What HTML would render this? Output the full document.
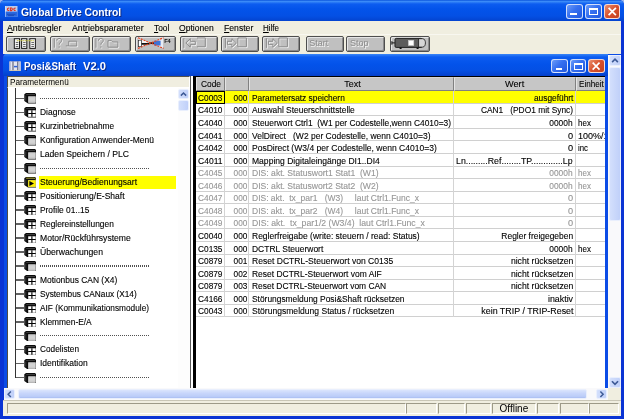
<!DOCTYPE html>
<html><head><meta charset="utf-8"><title>Global Drive Control</title>
<style>
*{box-sizing:border-box;margin:0;padding:0}
html,body{width:624px;height:419px;overflow:hidden;background:#9ab6ee}
body{font-family:"Liberation Sans",sans-serif;font-size:9.5px;color:#000;position:relative}
.a{position:absolute}
#win{left:0;top:0;width:624px;height:419px;background:#0a34d4;border-radius:5px 5px 0 0}
#tbar{left:0;top:0;width:624px;height:21px;border-radius:5px 5px 0 0;background:linear-gradient(#0a54dc 0,#3a8af8 1.5px,#0c5cf0 4px,#0353ea 9px,#0450e4 16px,#0443cf 21px)}
#ttl{left:20.6px;top:6.1px;color:#fff;font-weight:bold;font-size:11px;transform-origin:0 0;transform:scaleX(.936);text-shadow:1px 1px 0 #0a2a8a;white-space:nowrap}
#menu{left:3px;top:21px;width:618px;height:13px;background:#f0eee0}
#menu span{-webkit-text-stroke:.12px;position:absolute;top:.5px;font-size:8.5px;line-height:13px;white-space:nowrap}
#menu u{text-decoration:underline;text-decoration-thickness:.7px;text-underline-offset:1px}
#tool{left:3px;top:34px;width:618px;height:20px;background:#f0eee0;border-top:1px solid #f8f7f0}
.tb{position:absolute;top:36.3px;height:15.3px;overflow:hidden;background:#c0c0c0;border:1px solid #4e4e4e;box-shadow:inset 1px 1px 0 #e6e6e6,inset -1px -1px 0 #8a8a8a;border-radius:2px}
.tb span{position:absolute;left:2.6px;top:1.2px;font-size:9px;color:#8c8c8c;text-shadow:.8px .8px 0 #f6f6f6}
#mdi{left:3.5px;top:54px;width:617.5px;height:346px;background:#0b4ce6}
#ctb{left:3px;top:54px;width:605px;height:22px;background:linear-gradient(#3a86f7 0,#0c5cf0 3px,#0353ea 10px,#0450e4 16px,#0440cc 22px);border-top-left-radius:4px}
.cttl{left:24px;top:59.6px;color:#fff;font-weight:bold;font-size:10.5px;text-shadow:1px 1px 0 #0a2a8a;white-space:nowrap}
.cap{position:absolute;border:1px solid rgba(255,255,255,.78);border-radius:3px}
.capb{background:linear-gradient(135deg,#6c9cf8,#3670f0 45%,#2258de)}
.capr{background:linear-gradient(135deg,#e89070,#d8502c 50%,#c2421f)}
#cont{left:7px;top:76px;width:598px;height:312px;background:#fff}
#pmh{left:6.8px;top:76px;width:183px;height:11.5px;background:#f0eee0;border:1px solid;border-color:#55534a #fff #fff #4e4c44;font-size:8.5px;line-height:11px;padding-left:2px}
#tree{left:6.8px;top:87.5px;width:183.2px;height:300px;background:#fff;border-left:1px solid #4e4c44}
.tl{-webkit-text-stroke:.12px;position:absolute;left:38.5px;font-size:9px;line-height:11px;white-space:nowrap;padding:0 1.5px;letter-spacing:0}
.tl.sel{background:#ffff00;left:39.3px;padding-left:.7px;width:137px;height:13.2px;line-height:13.6px}
.dots{position:absolute;left:40px;width:110px;height:1.1px;background:repeating-linear-gradient(90deg,#505050 0 1px,transparent 1px 2px)}
.vline{position:absolute;left:15px;width:1.1px;background:#333}
.hline{position:absolute;left:15px;width:8.5px;height:1.3px;background:#626262}
.ico{position:absolute;left:23px;width:11px;height:11px}
#tsb{left:178px;top:88px;width:12px;height:300px;background:#fdfdfd}
.sbtn{position:absolute;background:linear-gradient(90deg,#d3dffc,#c0d0f9);border:1px solid #e9effd;border-radius:2px}
#blk{left:193.1px;top:75.7px;width:2.5px;height:312px;background:#000}
#gap{left:189.8px;top:76px;width:3.4px;height:312px;background:#fff;border-left:1.1px solid #5a5a5a}
#grid{left:195px;top:75.7px;width:410px;height:312.3px;background:#fff;border-top:1.2px solid #000}
.hd{-webkit-text-stroke:.1px;position:absolute;top:77px;height:13.6px;background:#c6c6c6;border-right:1px solid #808080;border-bottom:1px solid #808080;border-left:1px solid #e4e4e4;border-top:1px solid #d4d4d4;font-size:9.2px;line-height:12.6px;text-align:center;white-space:nowrap;overflow:hidden}
.r{position:absolute;left:195px;width:410px;height:12.57px;border-bottom:1px solid #d0d0d0;font-size:9.2px;line-height:13px;white-space:nowrap}
.r.y{background:#ffff00}
.r.g{color:#969696}
.r i span{position:relative;top:.6px;-webkit-text-stroke:.12px}
.r i{font-style:normal;position:absolute;top:0;height:12.57px;border-right:1px solid #d4d4d4;overflow:hidden}
.c1{left:0;width:30px;padding-left:3.3px}
.c2{left:30px;width:24px;text-align:right;padding-right:1px}
.c3{left:54px;width:205px;padding-left:3.2px}
.c4{left:259px;width:121.5px;text-align:right;padding-right:1.5px}
.c4.l{text-align:left;padding-left:2px}
.c5{left:380.5px;width:29.5px;padding-left:2.8px;border-right:0!important}
#hsb{left:3.5px;top:387.5px;width:604.5px;height:12px;background:#f9f9fb}
#vsb{left:608px;top:54.5px;width:13px;height:334px;background:#f9f9fb}
#stat{left:3px;top:400px;width:618px;height:16px;background:#f0eee0;border-top:1px solid #c9c6b6}
.sp{position:absolute;top:402.5px;height:11.5px;border:1px solid;border-color:#9d9a88 #fff #fff #9d9a88;font-size:10px;line-height:10.5px;text-align:center}
#wrap{position:absolute;left:0;top:0;width:624px;height:419px;will-change:transform}
</style></head><body><div id="wrap">
<div id="win" class="a"></div>
<div id="tbar" class="a"></div>
<svg class="a" style="left:5px;top:5.800px" width="12.500" height="10.800" viewBox="0 0 12.500 10.800"><rect width="12.500" height="10.800" fill="#bccaea"/><rect y="5.600" width="12.500" height="5.200" fill="#2a69e2"/><path d="M4.200 2.200c-2.400-.6-2.400 2.800 0 2.200M5.400 1.800v2.800c2.600.2 2.600-3 0-2.800M10.600 2.200c-2.400-.6-2.400 2.800 0 2.200" stroke="#e2341c" stroke-width="1.100" fill="none"/><path d="M2 8.300h8.500M3 9.600h6" stroke="#1a48b8" stroke-width=".9"/><path d="M.4 0v10.800" stroke="#e8eefc" stroke-width=".6"/></svg>
<div id="ttl" class="a">Global Drive Control</div>

<div class="cap capb" style="left:566.2px;top:4px;width:16.5px;height:15px"><div style="position:absolute;left:3.3px;bottom:2.7px;width:6.3px;height:2px;background:#fff"></div></div>
<div class="cap capb" style="left:585px;top:4px;width:16.5px;height:15px"><div style="position:absolute;left:3.0px;top:2.7px;width:9.2px;height:7.8px;border:1px solid #fff;border-top-width:2px"></div></div>
<div class="cap capr" style="left:603.6px;top:4px;width:16.5px;height:15px"><svg style="position:absolute;left:0;top:0" width="14.5" height="13" viewBox="0 0 10 10"><path d="M2.2 2.2L7.8 7.8M7.8 2.2L2.2 7.8" stroke="#fff" stroke-width="1.350" fill="none"/></svg></div>

<div id="menu" class="a"><span style="left:4.3px"><span id="m0" style="display:inline-block;transform-origin:0 0;transform:scaleX(1.0279)"><u>A</u>ntriebsregler</span></span><span style="left:68.7px"><span id="m1" style="display:inline-block;transform-origin:0 0;transform:scaleX(1.0235)">Ant<u>r</u>iebsparameter</span></span><span style="left:151.0px"><span id="m2" style="display:inline-block;transform-origin:0 0;transform:scaleX(0.9812)"><u>T</u>ool</span></span><span style="left:176.3px"><span id="m3" style="display:inline-block;transform-origin:0 0;transform:scaleX(1.0053)"><u>O</u>ptionen</span></span><span style="left:220.7px"><span id="m4" style="display:inline-block;transform-origin:0 0;transform:scaleX(1.0164)"><u>F</u>enster</span></span><span style="left:260.0px"><span id="m5" style="display:inline-block;transform-origin:0 0;transform:scaleX(0.9403)"><u>H</u>ilfe</span></span></div>
<div id="tool" class="a"></div>

<div class="tb" style="left:6.2px;width:40px"><svg style="position:absolute;left:0;top:0" width="38.0" height="13.300" viewBox="7.20 37.30 38.00 13.300"><g fill="#f4f4f4" stroke="#1a1a1a" stroke-width="1"><rect x="14.500" y="39" width="5.200" height="9.700"/><rect x="21.800" y="39" width="5.200" height="9.700"/><rect x="30" y="39" width="5.600" height="9.700"/></g><path d="M16 42.800h2.500M16 44.800h2.500M16 46.800h2.500M23.300 42.800h2.500M23.300 44.800h2.500M23.300 46.800h2.500M31.600 42.800h2.600M31.600 44.800h2.600M31.600 46.800h2.600" stroke="#444" stroke-width=".8"/><path d="M17 41h17" stroke="#c9c23a" stroke-width=".9" stroke-dasharray="1.500 .5"/></svg></div>
<div class="tb" style="left:50.2px;width:39.6px"><svg style="position:absolute;left:0;top:0" width="37.6" height="13.300" viewBox="51.20 37.30 37.60 13.300"><path d="M54.5 38.500v9.500M57.0 41c0-3 4.800-3 4.800-.3c0 2-2.400 2.200-2.400 4.300M59.4 46.800v1.200" transform="translate(0.8 0.8)" stroke="#f8f8f8" stroke-width="1" fill="none"/><path d="M54.5 38.500v9.500M57.0 41c0-3 4.800-3 4.800-.3c0 2-2.400 2.200-2.400 4.300M59.4 46.800v1.200" stroke="#8a8a8a" stroke-width="1" fill="none"/><path d="M66 46.200h3M69 41.500h8v4.800h-8z" transform="translate(0.8 0.8)" stroke="#f8f8f8" stroke-width="1" fill="none"/><path d="M66 46.200h3M69 41.500h8v4.800h-8z" stroke="#8a8a8a" stroke-width="1" fill="none"/></svg></div>
<div class="tb" style="left:91.5px;width:39.4px"><svg style="position:absolute;left:0;top:0" width="37.4" height="13.300" viewBox="92.50 37.30 37.40 13.300"><path d="M95.5 38.500v9.500M98.0 41c0-3 4.800-3 4.800-.3c0 2-2.400 2.200-2.400 4.300M100.4 46.800v1.200" transform="translate(0.8 0.8)" stroke="#f8f8f8" stroke-width="1" fill="none"/><path d="M95.5 38.500v9.500M98.0 41c0-3 4.800-3 4.800-.3c0 2-2.400 2.200-2.400 4.300M100.4 46.800v1.200" stroke="#8a8a8a" stroke-width="1" fill="none"/><path d="M107.500 47.500v-6.500h3.500l1.200 1.300h5.200v5.200z" transform="translate(0.8 0.8)" stroke="#f8f8f8" stroke-width="1" fill="none"/><path d="M107.500 47.500v-6.500h3.500l1.200 1.300h5.200v5.200z" stroke="#8a8a8a" stroke-width="1" fill="none"/></svg></div>
<div class="tb" style="left:135.4px;width:40.2px"><svg style="position:absolute;left:0;top:0" width="38.2" height="13.300" viewBox="136.40 37.30 38.20 13.300"><path d="M138.600 38.200L151 43.400L138.600 48.600z" fill="#f4f4f4"/><path d="M163.500 38.200L151 43.400L163.500 48.600z" fill="#e8ecf4"/><rect x="139" y="40.500" width="3" height="6.500" fill="#fff" stroke="#222" stroke-width=".7"/><path d="M142 44.200h6l3-.8h4" stroke="#111" stroke-width="1.700" fill="none"/><rect x="154.500" y="41" width="6.500" height="4.800" fill="#3d74d8"/><path d="M138.400 38L164 48.700M138.400 48.700L164 38" stroke="#e6401c" stroke-width="1.150" stroke-dasharray="2 1" fill="none"/><text x="164.600" y="43" font-family="Liberation Sans, sans-serif" font-size="5.600" font-weight="bold" fill="#111">F4</text></svg></div>
<div class="tb" style="left:179.7px;width:38.8px"><svg style="position:absolute;left:0;top:0" width="36.8" height="13.300" viewBox="180.70 37.30 36.80 13.300"><path d="M183.600 38.500v9.700M185.500 43.300l4.500-4.300v2.600h5v3.400h-5v2.600z" transform="translate(0.8 0.8)" stroke="#f8f8f8" stroke-width="1" fill="none"/><path d="M183.600 38.500v9.700M185.500 43.300l4.500-4.300v2.600h5v3.400h-5v2.600z" stroke="#8a8a8a" stroke-width="1" fill="none"/><path d="M196.700 38.300h8.300v8.800h-8.300" transform="translate(0.8 0.8)" stroke="#f8f8f8" stroke-width="1" fill="none"/><path d="M196.700 38.300h8.300v8.800h-8.300" stroke="#8a8a8a" stroke-width="1" fill="none"/></svg></div>
<div class="tb" style="left:220.6px;width:38.8px"><svg style="position:absolute;left:0;top:0" width="36.8" height="13.300" viewBox="221.60 37.30 36.80 13.300"><path d="M225 38.500v9.700M227 41.600h4.500v-2.600l4.500 4.300l-4.500 4.300v-2.600h-4.500z" transform="translate(0.8 0.8)" stroke="#f8f8f8" stroke-width="1" fill="none"/><path d="M225 38.500v9.700M227 41.600h4.500v-2.600l4.500 4.300l-4.500 4.300v-2.600h-4.500z" stroke="#8a8a8a" stroke-width="1" fill="none"/><path d="M237.5 38.300h8.500v8.800h-8.500z" transform="translate(0.8 0.8)" stroke="#f8f8f8" stroke-width="1" fill="none"/><path d="M237.5 38.300h8.500v8.800h-8.500z" stroke="#8a8a8a" stroke-width="1" fill="none"/></svg></div>
<div class="tb" style="left:261.9px;width:38.6px"><svg style="position:absolute;left:0;top:0" width="36.6" height="13.300" viewBox="262.90 37.30 36.60 13.300"><path d="M266.3 38.500v9.700M268.3 41.600h4.500v-2.600l4.500 4.300l-4.500 4.300v-2.600h-4.500z" transform="translate(0.8 0.8)" stroke="#f8f8f8" stroke-width="1" fill="none"/><path d="M266.3 38.500v9.700M268.3 41.600h4.500v-2.600l4.500 4.300l-4.500 4.300v-2.600h-4.500z" stroke="#8a8a8a" stroke-width="1" fill="none"/><path d="M278.8 38.300h8.500v8.800h-8.500z" transform="translate(0.8 0.8)" stroke="#f8f8f8" stroke-width="1" fill="none"/><path d="M278.8 38.300h8.500v8.800h-8.500z" stroke="#8a8a8a" stroke-width="1" fill="none"/></svg></div>
<div class="tb" style="left:305.6px;width:38.7px"><span>Start</span></div>
<div class="tb" style="left:346.4px;width:39px"><span>Stop</span></div>
<div class="tb" style="left:390.4px;width:39.4px"><svg style="position:absolute;left:0;top:0" width="37.4" height="13.300" viewBox="391.40 37.30 37.40 13.300"><path d="M392.300 41.500v3.500M392.300 43.200h3" stroke="#111" stroke-width="1" fill="none"/><rect x="395.400" y="38.700" width="27" height="9" rx="1.200" fill="#5c5c5c" stroke="#151515" stroke-width=".9"/><path d="M419 39h4c3.800 0 3.800 8.400 0 8.400h-4z" fill="#d6d6d6" stroke="#151515" stroke-width=".8"/><rect x="408.800" y="40.600" width="5.400" height="5.200" fill="#fff" stroke="#c8c8c8" stroke-width=".6"/><rect x="400" y="47.700" width="2" height="1.600" fill="#111"/><rect x="417" y="47.700" width="2" height="1.600" fill="#111"/></svg></div>

<div id="mdi" class="a"></div>
<div id="ctb" class="a"></div>
<svg class="a" style="left:8.500px;top:60.800px" width="12.200" height="10.300" viewBox="0 0 12.200 10.300"><rect width="12.200" height="10.300" fill="#e4e6f0" stroke="#1c46c8" stroke-width=".8"/><path d="M1.300 .5v9.300M10.800 .5v9.300" stroke="#b4bcd4" stroke-width="1.200"/><path d="M4 .5v9.300M8.800 .5v9.300" stroke="#4a5068" stroke-width="1"/><path d="M5 5.600h3.400" stroke="#2f62d8" stroke-width="1.500"/><path d="M.5 9.600h11.200" stroke="#d6c8a8" stroke-width=".9"/></svg>
<div class="a cttl"><span id="ct1" style="display:inline-block;transform-origin:0 0;transform:scaleX(0.9283)">Posi&amp;Shaft</span></div><div class="a cttl" style="left:83.300px"><span id="ct2" style="display:inline-block;transform-origin:0 0;transform:scaleX(1.0644)">V2.0</span></div>

<div class="cap capb" style="left:551.4px;top:59px;width:16.2px;height:14.3px"><div style="position:absolute;left:3.2px;bottom:2.6px;width:6.2px;height:2px;background:#fff"></div></div>
<div class="cap capb" style="left:569.8px;top:59px;width:16.2px;height:14.3px"><div style="position:absolute;left:2.9px;top:2.6px;width:9.1px;height:7.4px;border:1px solid #fff;border-top-width:2px"></div></div>
<div class="cap capr" style="left:588.4px;top:59px;width:16.2px;height:14.3px"><svg style="position:absolute;left:0;top:0" width="14.2" height="12.3" viewBox="0 0 10 10"><path d="M2.2 2.2L7.8 7.8M7.8 2.2L2.2 7.8" stroke="#fff" stroke-width="1.350" fill="none"/></svg></div>
<div id="cont" class="a"></div>
<div id="pmh" class="a"><span id="pm" style="display:inline-block;transform-origin:0 0;transform:scaleX(0.9630)">Parametermenü</span></div>
<div id="tree" class="a"></div>

<div class="vline" style="left:14.800px;top:88px;height:290.20px"></div>
<div class="hline" style="left:15.800px;top:97.70px"></div>
<svg class="a" style="left:23.9px;top:93.10px" width="12.400" height="10.600" viewBox="0 0 12.400 10.600"><path d="M.3 1.200L2 0H11L12.400 1.500V10.600H4L.3 8z" fill="#0c0c0c"/><path d="M2.200 1.500H11M1.800 2.600v5" stroke="#6e6e6e" stroke-width=".5" fill="none"/><rect x="4.200" y="3.300" width="7.500" height="6.500" fill="#e4e4e4"/><path d="M4.200 4.600h7.500M4.200 5.900h7.500M4.200 7.200h7.500M4.200 8.500h7.500" stroke="#b8b8b8" stroke-width=".55"/></svg>
<div class="dots" style="top:97.80px"></div>
<div class="hline" style="left:15.800px;top:111.67px"></div>
<svg class="a" style="left:23.9px;top:107.07px" width="12.400" height="10.600" viewBox="0 0 12.400 10.600"><path d="M.3 1.200L2 0H11L12.400 1.500V10.600H4L.3 8z" fill="#0c0c0c"/><path d="M2.200 1.500H11M1.800 2.600v5" stroke="#6e6e6e" stroke-width=".5" fill="none"/><rect x="4.200" y="3.300" width="7.500" height="6.500" fill="#fff"/><path d="M7.900 3.300v6.500M4.200 6.500h7.500" stroke="#000" stroke-width="1.150"/></svg>
<div class="tl" style="top:106.97px"><span id="t1" style="display:inline-block;transform-origin:0 0;transform:scaleX(0.9387)">Diagnose</span></div>
<div class="hline" style="left:15.800px;top:125.64px"></div>
<svg class="a" style="left:23.9px;top:121.04px" width="12.400" height="10.600" viewBox="0 0 12.400 10.600"><path d="M.3 1.200L2 0H11L12.400 1.500V10.600H4L.3 8z" fill="#0c0c0c"/><path d="M2.200 1.500H11M1.800 2.600v5" stroke="#6e6e6e" stroke-width=".5" fill="none"/><rect x="4.200" y="3.300" width="7.500" height="6.500" fill="#fff"/><path d="M7.900 3.300v6.500M4.200 6.500h7.500" stroke="#000" stroke-width="1.150"/></svg>
<div class="tl" style="top:120.94px"><span id="t2" style="display:inline-block;transform-origin:0 0;transform:scaleX(0.9185)">Kurzinbetriebnahme</span></div>
<div class="hline" style="left:15.800px;top:139.61px"></div>
<svg class="a" style="left:23.9px;top:135.01px" width="12.400" height="10.600" viewBox="0 0 12.400 10.600"><path d="M.3 1.200L2 0H11L12.400 1.500V10.600H4L.3 8z" fill="#0c0c0c"/><path d="M2.200 1.500H11M1.800 2.600v5" stroke="#6e6e6e" stroke-width=".5" fill="none"/><rect x="4.200" y="3.300" width="7.500" height="6.500" fill="#e4e4e4"/><path d="M4.200 4.600h7.500M4.200 5.900h7.500M4.200 7.200h7.500M4.200 8.500h7.500" stroke="#b8b8b8" stroke-width=".55"/></svg>
<div class="tl" style="top:134.91px"><span id="t3" style="display:inline-block;transform-origin:0 0;transform:scaleX(0.9415)">Konfiguration Anwender-Menü</span></div>
<div class="hline" style="left:15.800px;top:153.58px"></div>
<svg class="a" style="left:23.9px;top:148.98px" width="12.400" height="10.600" viewBox="0 0 12.400 10.600"><path d="M.3 1.200L2 0H11L12.400 1.500V10.600H4L.3 8z" fill="#0c0c0c"/><path d="M2.200 1.500H11M1.800 2.600v5" stroke="#6e6e6e" stroke-width=".5" fill="none"/><rect x="4.200" y="3.300" width="7.500" height="6.500" fill="#e4e4e4"/><path d="M4.200 4.600h7.500M4.200 5.900h7.500M4.200 7.200h7.500M4.200 8.500h7.500" stroke="#b8b8b8" stroke-width=".55"/></svg>
<div class="tl" style="top:148.88px"><span id="t4" style="display:inline-block;transform-origin:0 0;transform:scaleX(0.9562)">Laden Speichern / PLC</span></div>
<div class="hline" style="left:15.800px;top:167.55px"></div>
<svg class="a" style="left:23.9px;top:162.95px" width="12.400" height="10.600" viewBox="0 0 12.400 10.600"><path d="M.3 1.200L2 0H11L12.400 1.500V10.600H4L.3 8z" fill="#0c0c0c"/><path d="M2.200 1.500H11M1.800 2.600v5" stroke="#6e6e6e" stroke-width=".5" fill="none"/><rect x="4.200" y="3.300" width="7.500" height="6.500" fill="#e4e4e4"/><path d="M4.200 4.600h7.500M4.200 5.900h7.500M4.200 7.200h7.500M4.200 8.500h7.500" stroke="#b8b8b8" stroke-width=".55"/></svg>
<div class="dots" style="top:167.65px"></div>
<div class="hline" style="left:15.800px;top:181.52px"></div>
<svg class="a" style="left:23.9px;top:176.92px" width="12.400" height="10.600" viewBox="0 0 12.400 10.600"><path d="M.3 1.200L2 0H11L12.400 1.500V10.600H4L.3 8z" fill="#0c0c0c"/><path d="M2.200 1.500H11M1.800 2.600v5" stroke="#6e6e6e" stroke-width=".5" fill="none"/><rect x="4.200" y="3.300" width="7.500" height="6.500" fill="#fff"/><path d="M2.200 1.100H10.600L11.800 2.600" stroke="#d8d020" stroke-width=".7" fill="none"/><rect x="4.200" y="3.300" width="7.500" height="6.500" fill="#ffee00" stroke="#d8d020" stroke-width=".5"/><path d="M5.400 4.100v4.800l4.600-2.400z" fill="#000"/></svg>
<div class="tl sel" style="top:175.52px"><span id="t6" style="display:inline-block;transform-origin:0 0;transform:scaleX(0.9503)">Steuerung/Bedienungsart</span></div>
<div class="hline" style="left:15.800px;top:195.49px"></div>
<svg class="a" style="left:23.9px;top:190.89px" width="12.400" height="10.600" viewBox="0 0 12.400 10.600"><path d="M.3 1.200L2 0H11L12.400 1.500V10.600H4L.3 8z" fill="#0c0c0c"/><path d="M2.200 1.500H11M1.800 2.600v5" stroke="#6e6e6e" stroke-width=".5" fill="none"/><rect x="4.200" y="3.300" width="7.500" height="6.500" fill="#fff"/><path d="M7.900 3.300v6.500M4.200 6.500h7.500" stroke="#000" stroke-width="1.150"/></svg>
<div class="tl" style="top:190.79px"><span id="t7" style="display:inline-block;transform-origin:0 0;transform:scaleX(0.9435)">Positionierung/E-Shaft</span></div>
<div class="hline" style="left:15.800px;top:209.46px"></div>
<svg class="a" style="left:23.9px;top:204.86px" width="12.400" height="10.600" viewBox="0 0 12.400 10.600"><path d="M.3 1.200L2 0H11L12.400 1.500V10.600H4L.3 8z" fill="#0c0c0c"/><path d="M2.200 1.500H11M1.800 2.600v5" stroke="#6e6e6e" stroke-width=".5" fill="none"/><rect x="4.200" y="3.300" width="7.500" height="6.500" fill="#fff"/><path d="M7.900 3.300v6.500M4.200 6.500h7.500" stroke="#000" stroke-width="1.150"/></svg>
<div class="tl" style="top:204.76px"><span id="t8" style="display:inline-block;transform-origin:0 0;transform:scaleX(0.9294)">Profile 01..15</span></div>
<div class="hline" style="left:15.800px;top:223.43px"></div>
<svg class="a" style="left:23.9px;top:218.83px" width="12.400" height="10.600" viewBox="0 0 12.400 10.600"><path d="M.3 1.200L2 0H11L12.400 1.500V10.600H4L.3 8z" fill="#0c0c0c"/><path d="M2.200 1.500H11M1.800 2.600v5" stroke="#6e6e6e" stroke-width=".5" fill="none"/><rect x="4.200" y="3.300" width="7.500" height="6.500" fill="#fff"/><path d="M7.900 3.300v6.500M4.200 6.500h7.500" stroke="#000" stroke-width="1.150"/></svg>
<div class="tl" style="top:218.73px"><span id="t9" style="display:inline-block;transform-origin:0 0;transform:scaleX(0.9276)">Reglereinstellungen</span></div>
<div class="hline" style="left:15.800px;top:237.40px"></div>
<svg class="a" style="left:23.9px;top:232.80px" width="12.400" height="10.600" viewBox="0 0 12.400 10.600"><path d="M.3 1.200L2 0H11L12.400 1.500V10.600H4L.3 8z" fill="#0c0c0c"/><path d="M2.200 1.500H11M1.800 2.600v5" stroke="#6e6e6e" stroke-width=".5" fill="none"/><rect x="4.200" y="3.300" width="7.500" height="6.500" fill="#fff"/><path d="M7.900 3.300v6.500M4.200 6.500h7.500" stroke="#000" stroke-width="1.150"/></svg>
<div class="tl" style="top:232.70px"><span id="t10" style="display:inline-block;transform-origin:0 0;transform:scaleX(0.9555)">Motor/Rückführsysteme</span></div>
<div class="hline" style="left:15.800px;top:251.37px"></div>
<svg class="a" style="left:23.9px;top:246.77px" width="12.400" height="10.600" viewBox="0 0 12.400 10.600"><path d="M.3 1.200L2 0H11L12.400 1.500V10.600H4L.3 8z" fill="#0c0c0c"/><path d="M2.200 1.500H11M1.800 2.600v5" stroke="#6e6e6e" stroke-width=".5" fill="none"/><rect x="4.200" y="3.300" width="7.500" height="6.500" fill="#fff"/><path d="M7.900 3.300v6.500M4.200 6.500h7.500" stroke="#000" stroke-width="1.150"/></svg>
<div class="tl" style="top:246.67px"><span id="t11" style="display:inline-block;transform-origin:0 0;transform:scaleX(0.9611)">Überwachungen</span></div>
<div class="hline" style="left:15.800px;top:265.34px"></div>
<svg class="a" style="left:23.9px;top:260.74px" width="12.400" height="10.600" viewBox="0 0 12.400 10.600"><path d="M.3 1.200L2 0H11L12.400 1.500V10.600H4L.3 8z" fill="#0c0c0c"/><path d="M2.200 1.500H11M1.800 2.600v5" stroke="#6e6e6e" stroke-width=".5" fill="none"/><rect x="4.200" y="3.300" width="7.500" height="6.500" fill="#e4e4e4"/><path d="M4.200 4.600h7.500M4.200 5.900h7.500M4.200 7.200h7.500M4.200 8.500h7.500" stroke="#b8b8b8" stroke-width=".55"/></svg>
<div class="dots" style="top:265.44px"></div>
<div class="hline" style="left:15.800px;top:279.31px"></div>
<svg class="a" style="left:23.9px;top:274.71px" width="12.400" height="10.600" viewBox="0 0 12.400 10.600"><path d="M.3 1.200L2 0H11L12.400 1.500V10.600H4L.3 8z" fill="#0c0c0c"/><path d="M2.200 1.500H11M1.800 2.600v5" stroke="#6e6e6e" stroke-width=".5" fill="none"/><rect x="4.200" y="3.300" width="7.500" height="6.500" fill="#fff"/><path d="M7.900 3.300v6.500M4.200 6.500h7.500" stroke="#000" stroke-width="1.150"/></svg>
<div class="tl" style="top:274.61px"><span id="t13" style="display:inline-block;transform-origin:0 0;transform:scaleX(0.9366)">Motionbus CAN (X4)</span></div>
<div class="hline" style="left:15.800px;top:293.28px"></div>
<svg class="a" style="left:23.9px;top:288.68px" width="12.400" height="10.600" viewBox="0 0 12.400 10.600"><path d="M.3 1.200L2 0H11L12.400 1.500V10.600H4L.3 8z" fill="#0c0c0c"/><path d="M2.200 1.500H11M1.800 2.600v5" stroke="#6e6e6e" stroke-width=".5" fill="none"/><rect x="4.200" y="3.300" width="7.500" height="6.500" fill="#fff"/><path d="M7.900 3.300v6.500M4.200 6.500h7.500" stroke="#000" stroke-width="1.150"/></svg>
<div class="tl" style="top:288.58px"><span id="t14" style="display:inline-block;transform-origin:0 0;transform:scaleX(0.9205)">Systembus CANaux (X14)</span></div>
<div class="hline" style="left:15.800px;top:307.25px"></div>
<svg class="a" style="left:23.9px;top:302.65px" width="12.400" height="10.600" viewBox="0 0 12.400 10.600"><path d="M.3 1.200L2 0H11L12.400 1.500V10.600H4L.3 8z" fill="#0c0c0c"/><path d="M2.200 1.500H11M1.800 2.600v5" stroke="#6e6e6e" stroke-width=".5" fill="none"/><rect x="4.200" y="3.300" width="7.500" height="6.500" fill="#fff"/><path d="M7.900 3.300v6.500M4.200 6.500h7.500" stroke="#000" stroke-width="1.150"/></svg>
<div class="tl" style="top:302.55px"><span id="t15" style="display:inline-block;transform-origin:0 0;transform:scaleX(0.9195)">AIF (Kommunikationsmodule)</span></div>
<div class="hline" style="left:15.800px;top:321.22px"></div>
<svg class="a" style="left:23.9px;top:316.62px" width="12.400" height="10.600" viewBox="0 0 12.400 10.600"><path d="M.3 1.200L2 0H11L12.400 1.500V10.600H4L.3 8z" fill="#0c0c0c"/><path d="M2.200 1.500H11M1.800 2.600v5" stroke="#6e6e6e" stroke-width=".5" fill="none"/><rect x="4.200" y="3.300" width="7.500" height="6.500" fill="#fff"/><path d="M7.900 3.300v6.500M4.200 6.500h7.500" stroke="#000" stroke-width="1.150"/></svg>
<div class="tl" style="top:316.52px"><span id="t16" style="display:inline-block;transform-origin:0 0;transform:scaleX(0.9310)">Klemmen-E/A</span></div>
<div class="hline" style="left:15.800px;top:335.19px"></div>
<svg class="a" style="left:23.9px;top:330.59px" width="12.400" height="10.600" viewBox="0 0 12.400 10.600"><path d="M.3 1.200L2 0H11L12.400 1.500V10.600H4L.3 8z" fill="#0c0c0c"/><path d="M2.200 1.500H11M1.800 2.600v5" stroke="#6e6e6e" stroke-width=".5" fill="none"/><rect x="4.200" y="3.300" width="7.500" height="6.500" fill="#e4e4e4"/><path d="M4.200 4.600h7.500M4.200 5.900h7.500M4.200 7.200h7.500M4.200 8.500h7.500" stroke="#b8b8b8" stroke-width=".55"/></svg>
<div class="dots" style="top:335.29px"></div>
<div class="hline" style="left:15.800px;top:349.16px"></div>
<svg class="a" style="left:23.9px;top:344.56px" width="12.400" height="10.600" viewBox="0 0 12.400 10.600"><path d="M.3 1.200L2 0H11L12.400 1.500V10.600H4L.3 8z" fill="#0c0c0c"/><path d="M2.200 1.500H11M1.800 2.600v5" stroke="#6e6e6e" stroke-width=".5" fill="none"/><rect x="4.200" y="3.300" width="7.500" height="6.500" fill="#fff"/><path d="M7.900 3.300v6.500M4.200 6.500h7.500" stroke="#000" stroke-width="1.150"/></svg>
<div class="tl" style="top:344.46px"><span id="t18" style="display:inline-block;transform-origin:0 0;transform:scaleX(0.9170)">Codelisten</span></div>
<div class="hline" style="left:15.800px;top:363.13px"></div>
<svg class="a" style="left:23.9px;top:358.53px" width="12.400" height="10.600" viewBox="0 0 12.400 10.600"><path d="M.3 1.200L2 0H11L12.400 1.500V10.600H4L.3 8z" fill="#0c0c0c"/><path d="M2.200 1.500H11M1.800 2.600v5" stroke="#6e6e6e" stroke-width=".5" fill="none"/><rect x="4.200" y="3.300" width="7.500" height="6.500" fill="#e4e4e4"/><path d="M4.200 4.600h7.500M4.200 5.900h7.500M4.200 7.200h7.500M4.200 8.500h7.500" stroke="#b8b8b8" stroke-width=".55"/></svg>
<div class="tl" style="top:358.43px"><span id="t19" style="display:inline-block;transform-origin:0 0;transform:scaleX(0.9437)">Identifikation</span></div>
<div class="hline" style="left:15.800px;top:377.10px"></div>
<svg class="a" style="left:23.9px;top:372.50px" width="12.400" height="10.600" viewBox="0 0 12.400 10.600"><path d="M.3 1.200L2 0H11L12.400 1.500V10.600H4L.3 8z" fill="#0c0c0c"/><path d="M2.200 1.500H11M1.800 2.600v5" stroke="#6e6e6e" stroke-width=".5" fill="none"/><rect x="4.200" y="3.300" width="7.500" height="6.500" fill="#e4e4e4"/><path d="M4.200 4.600h7.500M4.200 5.900h7.500M4.200 7.200h7.500M4.200 8.500h7.500" stroke="#b8b8b8" stroke-width=".55"/></svg>
<div class="dots" style="top:377.20px"></div>
<div id="tsb" class="a"></div>
<div class="sbtn" style="left:178px;top:88.7px;width:11px;height:10.3px"><svg style="position:absolute;left:0;top:0" width="9" height="8.3" viewBox="0 0 10 10"><path d="M1.800 6.800L5 3.600L8.200 6.800" stroke="#3d5a96" stroke-width="1.800" fill="none"/></svg></div>
<div class="sbtn" style="left:178px;top:99.800px;width:11px;height:11.700px"></div>
<div id="gap" class="a"></div><div id="grid" class="a"></div>
<div class="hd" style="left:195.6px;width:29.4px;padding-left:1.400px"><span id="hcode" style="display:inline-block;transform-origin:50% 0;transform:scaleX(0.9104)">Code</span></div>
<div class="hd" style="left:225px;width:24px"></div>
<div class="hd" style="left:249px;width:205px;padding-left:2.600px"><span id="htext" style="display:inline-block;transform-origin:50% 0;transform:scaleX(0.9728)">Text</span></div>
<div class="hd" style="left:454px;width:121.5px"><span id="hwert" style="display:inline-block;transform-origin:50% 0;transform:scaleX(0.9982)">Wert</span></div>
<div class="hd" style="left:575.5px;width:29.5px;text-align:left;padding-left:2.600px;border-right:0"><span id="heinh" style="display:inline-block;transform-origin:0 0;transform:scaleX(0.8828)">Einheit</span></div>
<div class="r y" style="top:91.20px"><i class="c1"><span id="c0" style="display:inline-block;transform-origin:0 0;transform:scaleX(0.9048)">C0003</span></i><i class="c2"><span id="s0" style="display:inline-block;transform-origin:100% 0;transform:scaleX(0.8994)">000</span></i><i class="c3"><span id="x0" style="display:inline-block;transform-origin:0 0;transform:scaleX(0.9086)">Parametersatz speichern</span></i><i class="c4"><span id="v0" style="display:inline-block;transform-origin:100% 0;transform:scaleX(0.9097)">ausgeführt</span></i><i class="c5"></i></div>
<div class="r" style="top:103.77px"><i class="c1"><span id="c1" style="display:inline-block;transform-origin:0 0;transform:scaleX(0.9048)">C4010</span></i><i class="c2"><span id="s1" style="display:inline-block;transform-origin:100% 0;transform:scaleX(0.8994)">000</span></i><i class="c3"><span id="x1" style="display:inline-block;transform-origin:0 0;transform:scaleX(0.9149)">Auswahl Steuerschnittstelle</span></i><i class="c4"><span id="v1" style="display:inline-block;transform-origin:100% 0;transform:scaleX(0.9120)">CAN1&nbsp;&nbsp; (PDO1 mit Sync)</span></i><i class="c5"></i></div>
<div class="r" style="top:116.34px"><i class="c1"><span id="c2" style="display:inline-block;transform-origin:0 0;transform:scaleX(0.9048)">C4040</span></i><i class="c2"><span id="s2" style="display:inline-block;transform-origin:100% 0;transform:scaleX(0.8994)">000</span></i><i class="c3"><span id="x2" style="display:inline-block;transform-origin:0 0;transform:scaleX(0.9137)">Steuerwort Ctrl1&nbsp; (W1 per Codestelle,wenn C4010=3)</span></i><i class="c4"><span id="v2" style="display:inline-block;transform-origin:100% 0;transform:scaleX(0.9115)">0000h</span></i><i class="c5"><span id="e2" style="display:inline-block;transform-origin:0 0;transform:scaleX(0.8700)">hex</span></i></div>
<div class="r" style="top:128.91px"><i class="c1"><span id="c3" style="display:inline-block;transform-origin:0 0;transform:scaleX(0.9048)">C4041</span></i><i class="c2"><span id="s3" style="display:inline-block;transform-origin:100% 0;transform:scaleX(0.8994)">000</span></i><i class="c3"><span id="x3" style="display:inline-block;transform-origin:0 0;transform:scaleX(0.9240)">VelDirect&nbsp;&nbsp; (W2 per Codestelle, wenn C4010=3)</span></i><i class="c4"><span id="v3" style="display:inline-block;transform-origin:100% 0;transform:scaleX(1.0000)">0</span></i><i class="c5"><span id="e3" style="display:inline-block;transform-origin:0 0;transform:scaleX(0.9784)">100%/1</span></i></div>
<div class="r" style="top:141.48px"><i class="c1"><span id="c4" style="display:inline-block;transform-origin:0 0;transform:scaleX(0.9048)">C4042</span></i><i class="c2"><span id="s4" style="display:inline-block;transform-origin:100% 0;transform:scaleX(0.8994)">000</span></i><i class="c3"><span id="x4" style="display:inline-block;transform-origin:0 0;transform:scaleX(0.9291)">PosDirect (W3/4 per Codestelle, wenn C4010=3)</span></i><i class="c4"><span id="v4" style="display:inline-block;transform-origin:100% 0;transform:scaleX(1.0000)">0</span></i><i class="c5"><span id="e4" style="display:inline-block;transform-origin:0 0;transform:scaleX(0.8511)">inc</span></i></div>
<div class="r" style="top:154.05px"><i class="c1"><span id="c5" style="display:inline-block;transform-origin:0 0;transform:scaleX(0.9278)">C4011</span></i><i class="c2"><span id="s5" style="display:inline-block;transform-origin:100% 0;transform:scaleX(0.8994)">000</span></i><i class="c3"><span id="x5" style="display:inline-block;transform-origin:0 0;transform:scaleX(0.9302)">Mapping Digitaleingänge DI1..DI4</span></i><i class="c4 l"><span id="v5" style="display:inline-block;transform-origin:0 0;transform:scaleX(0.9567)">Ln.........Ref........TP.............Lp</span></i><i class="c5"></i></div>
<div class="r g" style="top:166.62px"><i class="c1"><span id="c6" style="display:inline-block;transform-origin:0 0;transform:scaleX(0.9048)">C4045</span></i><i class="c2"><span id="s6" style="display:inline-block;transform-origin:100% 0;transform:scaleX(0.8994)">000</span></i><i class="c3"><span id="x6" style="display:inline-block;transform-origin:0 0;transform:scaleX(0.9356)">DIS: akt. Statuswort1 Stat1&nbsp; (W1)</span></i><i class="c4"><span id="v6" style="display:inline-block;transform-origin:100% 0;transform:scaleX(0.9115)">0000h</span></i><i class="c5"><span id="e6" style="display:inline-block;transform-origin:0 0;transform:scaleX(0.8700)">hex</span></i></div>
<div class="r g" style="top:179.19px"><i class="c1"><span id="c7" style="display:inline-block;transform-origin:0 0;transform:scaleX(0.9048)">C4046</span></i><i class="c2"><span id="s7" style="display:inline-block;transform-origin:100% 0;transform:scaleX(0.8994)">000</span></i><i class="c3"><span id="x7" style="display:inline-block;transform-origin:0 0;transform:scaleX(0.9356)">DIS: akt. Statuswort2 Stat2&nbsp; (W2)</span></i><i class="c4"><span id="v7" style="display:inline-block;transform-origin:100% 0;transform:scaleX(0.9115)">0000h</span></i><i class="c5"><span id="e7" style="display:inline-block;transform-origin:0 0;transform:scaleX(0.8700)">hex</span></i></div>
<div class="r g" style="top:191.76px"><i class="c1"><span id="c8" style="display:inline-block;transform-origin:0 0;transform:scaleX(0.9048)">C4047</span></i><i class="c2"><span id="s8" style="display:inline-block;transform-origin:100% 0;transform:scaleX(0.8994)">000</span></i><i class="c3"><span id="x8" style="display:inline-block;transform-origin:0 0;transform:scaleX(0.9239)">DIS: akt.&nbsp; tx_par1&nbsp;&nbsp; (W3)&nbsp;&nbsp;&nbsp;&nbsp; laut Ctrl1.Func_x</span></i><i class="c4"><span id="v8" style="display:inline-block;transform-origin:100% 0;transform:scaleX(1.0000)">0</span></i><i class="c5"></i></div>
<div class="r g" style="top:204.33px"><i class="c1"><span id="c9" style="display:inline-block;transform-origin:0 0;transform:scaleX(0.9048)">C4048</span></i><i class="c2"><span id="s9" style="display:inline-block;transform-origin:100% 0;transform:scaleX(0.8994)">000</span></i><i class="c3"><span id="x9" style="display:inline-block;transform-origin:0 0;transform:scaleX(0.9239)">DIS: akt.&nbsp; tx_par2&nbsp;&nbsp; (W4)&nbsp;&nbsp;&nbsp;&nbsp; laut Ctrl1.Func_x</span></i><i class="c4"><span id="v9" style="display:inline-block;transform-origin:100% 0;transform:scaleX(1.0000)">0</span></i><i class="c5"></i></div>
<div class="r g" style="top:216.90px"><i class="c1"><span id="c10" style="display:inline-block;transform-origin:0 0;transform:scaleX(0.9048)">C4049</span></i><i class="c2"><span id="s10" style="display:inline-block;transform-origin:100% 0;transform:scaleX(0.8994)">000</span></i><i class="c3"><span id="x10" style="display:inline-block;transform-origin:0 0;transform:scaleX(0.9427)">DIS: akt.&nbsp; tx_par1/2 (W3/4)&nbsp; laut Ctrl1.Func_x</span></i><i class="c4"><span id="v10" style="display:inline-block;transform-origin:100% 0;transform:scaleX(1.0000)">0</span></i><i class="c5"></i></div>
<div class="r" style="top:229.47px"><i class="c1"><span id="c11" style="display:inline-block;transform-origin:0 0;transform:scaleX(0.9048)">C0040</span></i><i class="c2"><span id="s11" style="display:inline-block;transform-origin:100% 0;transform:scaleX(0.8994)">000</span></i><i class="c3"><span id="x11" style="display:inline-block;transform-origin:0 0;transform:scaleX(0.9250)">Reglerfreigabe (write: steuern / read: Status)</span></i><i class="c4"><span id="v11" style="display:inline-block;transform-origin:100% 0;transform:scaleX(0.9187)">Regler freigegeben</span></i><i class="c5"></i></div>
<div class="r" style="top:242.04px"><i class="c1"><span id="c12" style="display:inline-block;transform-origin:0 0;transform:scaleX(0.9048)">C0135</span></i><i class="c2"><span id="s12" style="display:inline-block;transform-origin:100% 0;transform:scaleX(0.8994)">000</span></i><i class="c3"><span id="x12" style="display:inline-block;transform-origin:0 0;transform:scaleX(0.9228)">DCTRL Steuerwort</span></i><i class="c4"><span id="v12" style="display:inline-block;transform-origin:100% 0;transform:scaleX(0.9115)">0000h</span></i><i class="c5"><span id="e12" style="display:inline-block;transform-origin:0 0;transform:scaleX(0.8700)">hex</span></i></div>
<div class="r" style="top:254.61px"><i class="c1"><span id="c13" style="display:inline-block;transform-origin:0 0;transform:scaleX(0.9048)">C0879</span></i><i class="c2"><span id="s13" style="display:inline-block;transform-origin:100% 0;transform:scaleX(0.8994)">001</span></i><i class="c3"><span id="x13" style="display:inline-block;transform-origin:0 0;transform:scaleX(0.9316)">Reset DCTRL-Steuerwort von C0135</span></i><i class="c4"><span id="v13" style="display:inline-block;transform-origin:100% 0;transform:scaleX(0.9414)">nicht rücksetzen</span></i><i class="c5"></i></div>
<div class="r" style="top:267.18px"><i class="c1"><span id="c14" style="display:inline-block;transform-origin:0 0;transform:scaleX(0.9048)">C0879</span></i><i class="c2"><span id="s14" style="display:inline-block;transform-origin:100% 0;transform:scaleX(0.8994)">002</span></i><i class="c3"><span id="x14" style="display:inline-block;transform-origin:0 0;transform:scaleX(0.9211)">Reset DCTRL-Steuerwort vom AIF</span></i><i class="c4"><span id="v14" style="display:inline-block;transform-origin:100% 0;transform:scaleX(0.9414)">nicht rücksetzen</span></i><i class="c5"></i></div>
<div class="r" style="top:279.75px"><i class="c1"><span id="c15" style="display:inline-block;transform-origin:0 0;transform:scaleX(0.9048)">C0879</span></i><i class="c2"><span id="s15" style="display:inline-block;transform-origin:100% 0;transform:scaleX(0.8994)">003</span></i><i class="c3"><span id="x15" style="display:inline-block;transform-origin:0 0;transform:scaleX(0.9158)">Reset DCTRL-Steuerwort vom CAN</span></i><i class="c4"><span id="v15" style="display:inline-block;transform-origin:100% 0;transform:scaleX(0.9414)">nicht rücksetzen</span></i><i class="c5"></i></div>
<div class="r" style="top:292.32px"><i class="c1"><span id="c16" style="display:inline-block;transform-origin:0 0;transform:scaleX(0.9048)">C4166</span></i><i class="c2"><span id="s16" style="display:inline-block;transform-origin:100% 0;transform:scaleX(0.8994)">000</span></i><i class="c3"><span id="x16" style="display:inline-block;transform-origin:0 0;transform:scaleX(0.9132)">Störungsmeldung Posi&amp;Shaft rücksetzen</span></i><i class="c4"><span id="v16" style="display:inline-block;transform-origin:100% 0;transform:scaleX(0.9636)">inaktiv</span></i><i class="c5"></i></div>
<div class="r" style="top:304.89px"><i class="c1"><span id="c17" style="display:inline-block;transform-origin:0 0;transform:scaleX(0.9048)">C0043</span></i><i class="c2"><span id="s17" style="display:inline-block;transform-origin:100% 0;transform:scaleX(0.8994)">000</span></i><i class="c3"><span id="x17" style="display:inline-block;transform-origin:0 0;transform:scaleX(0.9312)">Störungsmeldung Status / rücksetzen</span></i><i class="c4"><span id="v17" style="display:inline-block;transform-origin:100% 0;transform:scaleX(0.9656)">kein TRIP / TRIP-Reset</span></i><i class="c5"></i></div>
<div class="a" style="left:195.700px;top:90.50px;width:29.300px;height:13.400px;border:1.600px solid #000"></div>
<div id="blk" class="a"></div>
<div id="hsb" class="a"></div>
<div class="sbtn" style="left:4px;top:388.5px;width:11px;height:10.5px"><svg style="position:absolute;left:0;top:0" width="9" height="8.5" viewBox="0 0 10 10"><path d="M6.600 1.800L3.400 5L6.600 8.200" stroke="#3d5a96" stroke-width="1.800" fill="none"/></svg></div>
<div class="sbtn" style="left:17.500px;top:388.500px;width:569px;height:10.500px;background:linear-gradient(#dbe5fd,#c8d6fb 40%,#bccdf8 80%,#a9bdf2)"></div>
<div class="sbtn" style="left:595.5px;top:388.5px;width:11.5px;height:10.5px"><svg style="position:absolute;left:0;top:0" width="9.5" height="8.5" viewBox="0 0 10 10"><path d="M3.400 1.800L6.600 5L3.400 8.200" stroke="#3d5a96" stroke-width="1.800" fill="none"/></svg></div>
<div id="vsb" class="a"></div>
<div class="sbtn" style="left:608.5px;top:55px;width:12px;height:11px"><svg style="position:absolute;left:0;top:0" width="10" height="9" viewBox="0 0 10 10"><path d="M1.800 6.800L5 3.600L8.200 6.800" stroke="#3d5a96" stroke-width="1.800" fill="none"/></svg></div>
<div class="sbtn" style="left:608.500px;top:66.500px;width:12px;height:154.500px"></div>
<div class="sbtn" style="left:608.5px;top:376.5px;width:12px;height:11.5px"><svg style="position:absolute;left:0;top:0" width="10" height="9.5" viewBox="0 0 10 10"><path d="M1.800 3.400L5 6.600L8.200 3.400" stroke="#3d5a96" stroke-width="1.800" fill="none"/></svg></div>
<div class="a" style="left:608px;top:388px;width:13px;height:12px;background:#f0eee0"></div>
<div id="stat" class="a"></div>
<div class="sp" style="left:7px;width:398.5px"></div>
<div class="sp" style="left:406.4px;width:30.6px"></div>
<div class="sp" style="left:437.6px;width:27.8px"></div>
<div class="sp" style="left:466px;width:25px"></div>
<div class="sp" style="left:491.6px;width:44.6px">Offline</div>
<div class="sp" style="left:536.8px;width:22.2px"></div>
<div class="sp" style="left:559.5px;width:29px"></div>
<div class="sp" style="left:589px;width:29.5px"></div>
</div></body></html>
